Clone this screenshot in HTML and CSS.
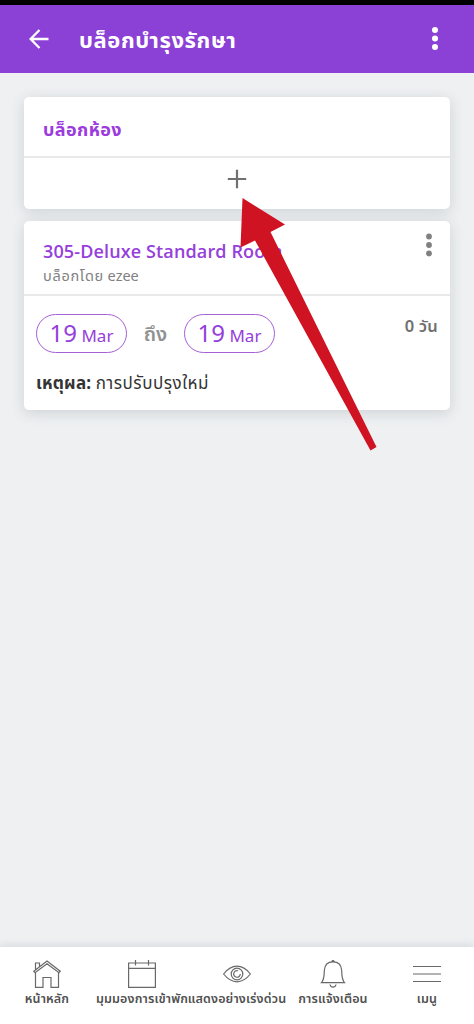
FILE: index.html
```
<!DOCTYPE html>
<html lang="th">
<head>
<meta charset="utf-8">
<meta name="viewport" content="width=device-width, initial-scale=1">
<title>บล็อกบำรุงรักษา</title>
<link rel="stylesheet" href="styles.css">
</head>
<body>
<div class="screen">
  <header class="appbar">
    <svg class="back" width="20" height="20" viewBox="0 0 20 20"><path d="M10.500 1 1.600 10l8.900 9M2 10h17.500"/></svg>
    <h1 class="title">บล็อกบำรุงรักษา</h1>
    <svg class="dots" width="8" height="24" viewBox="0 0 8 24"><circle cx="4" cy="3" r="3"/><circle cx="4" cy="11.500" r="3"/><circle cx="4" cy="20" r="3"/></svg>
  </header>
  <main class="content">
    <section class="card add-card">
      <h2 class="add-title">บล็อกห้อง</h2>
      <div class="add-row"><svg width="20" height="20" viewBox="0 0 20 20"><path d="M10 .8v18.400M.8 10h18.400"/></svg></div>
    </section>
    <section class="card room-card">
      <div class="room-head">
        <div>
          <h2 class="room-name">305-Deluxe Standard Room</h2>
          <p class="blocked-by"><span class="by">บล็อกโดย</span> ezee</p>
        </div>
        <svg class="dots room-dots" width="8" height="24" viewBox="0 0 8 24"><circle cx="4" cy="3.500" r="2.900"/><circle cx="4" cy="12" r="2.900"/><circle cx="4" cy="20.500" r="2.900"/></svg>
      </div>
      <div class="dates">
        <span class="pill"><b>19</b> Mar</span>
        <span class="to">ถึง</span>
        <span class="pill"><b>19</b> Mar</span>
        <span class="days">0 วัน</span>
      </div>
      <p class="reason"><strong>เหตุผล:</strong> <span>การปรับปรุงใหม่</span></p>
    </section>
  </main>
  <nav class="tabs">
    <a class="tab"><svg width="28" height="28" viewBox="0 0 28 28"><path d="M.8 11.200 14 1l13.200 10.200-1.200 1.500L14 3.800 2 12.700zM2.500 10V3h4v3.500M2.500 12.500V27.300h7.500V17.500h8v9.800h7.500V12.500"/></svg><span>หน้าหลัก</span></a>
    <a class="tab"><svg width="28" height="28" viewBox="0 0 28 28"><path d="M.6 3h26.800v24.300H.6zM.6 8.300h26.800M7.500 0v5.500M20.500 0v5.500"/></svg><span>มุมมองการเข้าพัก</span></a>
    <a class="tab"><svg width="28" height="28" viewBox="0 0 28 28"><path d="M.6 14C5 8.500 9 6.200 14 6.200S23 8.500 27.400 14C23 19.500 19 21.800 14 21.800S5 19.500 .6 14zM15 10.800A3.300 3.300 0 1 0 17.300 14"/><circle cx="14" cy="14" r="5.800"/></svg><span>แสดงอย่างเร่งด่วน</span></a>
    <a class="tab alerts"><svg width="28" height="28" viewBox="0 0 28 28"><path d="M2.500 22.700C5.500 19 5 16 5.300 10.500 5.600 5 8.500 1.800 14 1.800s8.400 3.200 8.700 8.700C23 16 22.500 19 25.500 22.700zM11 24.500c.5 3.500 5.500 3.500 6 0M12.700 1.500Q14-.5 15.300 1.500"/></svg><span>การแจ้งเตือน</span></a>
    <a class="tab"><svg width="28" height="28" viewBox="0 0 28 28"><path d="M0 6.500h28M0 14h28M0 21.500h28"/></svg><span>เมนู</span></a>
  </nav>
  <svg class="pointer" width="137" height="254" viewBox="0 0 137 254"><path d="M2.500 0 45 26.500 30.500 34 136.500 249l-6 3.500L15 42.500.500 49.500z"/></svg>
</div>
</body>
</html>
```
FILE: styles.css
```
* { box-sizing: border-box; }
body { margin: 0; font-family: "Noto Sans", "Noto Sans Thai", sans-serif; }
h1, h2, p { margin: 0; }
svg { display: block; fill: none; flex: none; }
.screen { position: relative; width: 474px; height: 1024px; display: flex; flex-direction: column; background: #eef0f2; overflow: hidden; white-space: nowrap; }
.appbar { height: 73px; border-top: 5px solid #000; background: #8b40d6; display: flex; align-items: center; padding: 0 35px 0 29px; color: #fff; }
.back { stroke: #fff; stroke-width: 2.300; }
.title { flex: 1; margin-left: 30px; font-size: 22px; line-height: 30px; font-weight: 700; letter-spacing: .6px; }
.dots { fill: #fff; }
.content { flex: 1; display: flex; flex-direction: column; gap: 12px; padding: 24px; }
.card { background: #fff; border-radius: 5px; box-shadow: 0 3px 14px rgba(55, 70, 80, .17); }
.add-card { height: 112px; }
.add-title { height: 61px; padding: 17px 19px 0; border-bottom: 2px solid #e7e9eb; font-size: 18px; line-height: 30px; color: #9c3bdd; letter-spacing: .4px; }
.add-row { display: flex; justify-content: center; padding-top: 11px; }
.add-row svg { stroke: #707070; stroke-width: 2.200; }
.room-card { height: 189px; }
.room-head { height: 75px; display: flex; justify-content: space-between; border-bottom: 2px solid #e7e9eb; padding: 17px 17px 0 19px; }
.room-name { font-family: "Open Sans", sans-serif; font-size: 18px; line-height: 26px; font-weight: 600; color: #9640db; letter-spacing: .13px; }
.blocked-by { font-size: 14.500px; line-height: 23px; color: #808080; }
.by { letter-spacing: .7px; }
.room-dots { fill: #808080; margin-top: -5px; }
.dates { display: flex; align-items: flex-start; padding: 18px 12px 0; }
.pill { width: 91px; height: 39px; border: 1px solid #a660d5; border-radius: 20px; text-align: center; line-height: 35px; font-size: 17px; color: #9640db; }
.pill b { font-size: 24px; font-weight: 400; }
.to { width: 57px; text-align: center; line-height: 40px; font-size: 20px; font-weight: 600; color: #929292; }
.days { margin-left: auto; font-size: 16.500px; line-height: 24px; font-weight: 600; color: #707070; letter-spacing: .2px; }
.reason { padding: 14px 12px 0; font-size: 17px; line-height: 30px; color: #333; }
.reason strong { letter-spacing: .2px; }
.reason span { letter-spacing: .5px; }
.tabs { height: 77px; background: #fff; box-shadow: 0 -2px 8px rgba(55, 70, 80, .12); display: grid; grid-template-columns: repeat(5, 95px); padding-top: 13px; }
.tab { display: flex; flex-direction: column; align-items: center; margin-left: -1px; color: #505050; font-size: 12.500px; line-height: 22px; font-weight: 600; letter-spacing: .15px; }
.alerts { margin-left: 1px; }
.tab svg { stroke: #696969; stroke-width: 1.200; }
.pointer { position: absolute; left: 240px; top: 198px; fill: #cf1322; }
```
